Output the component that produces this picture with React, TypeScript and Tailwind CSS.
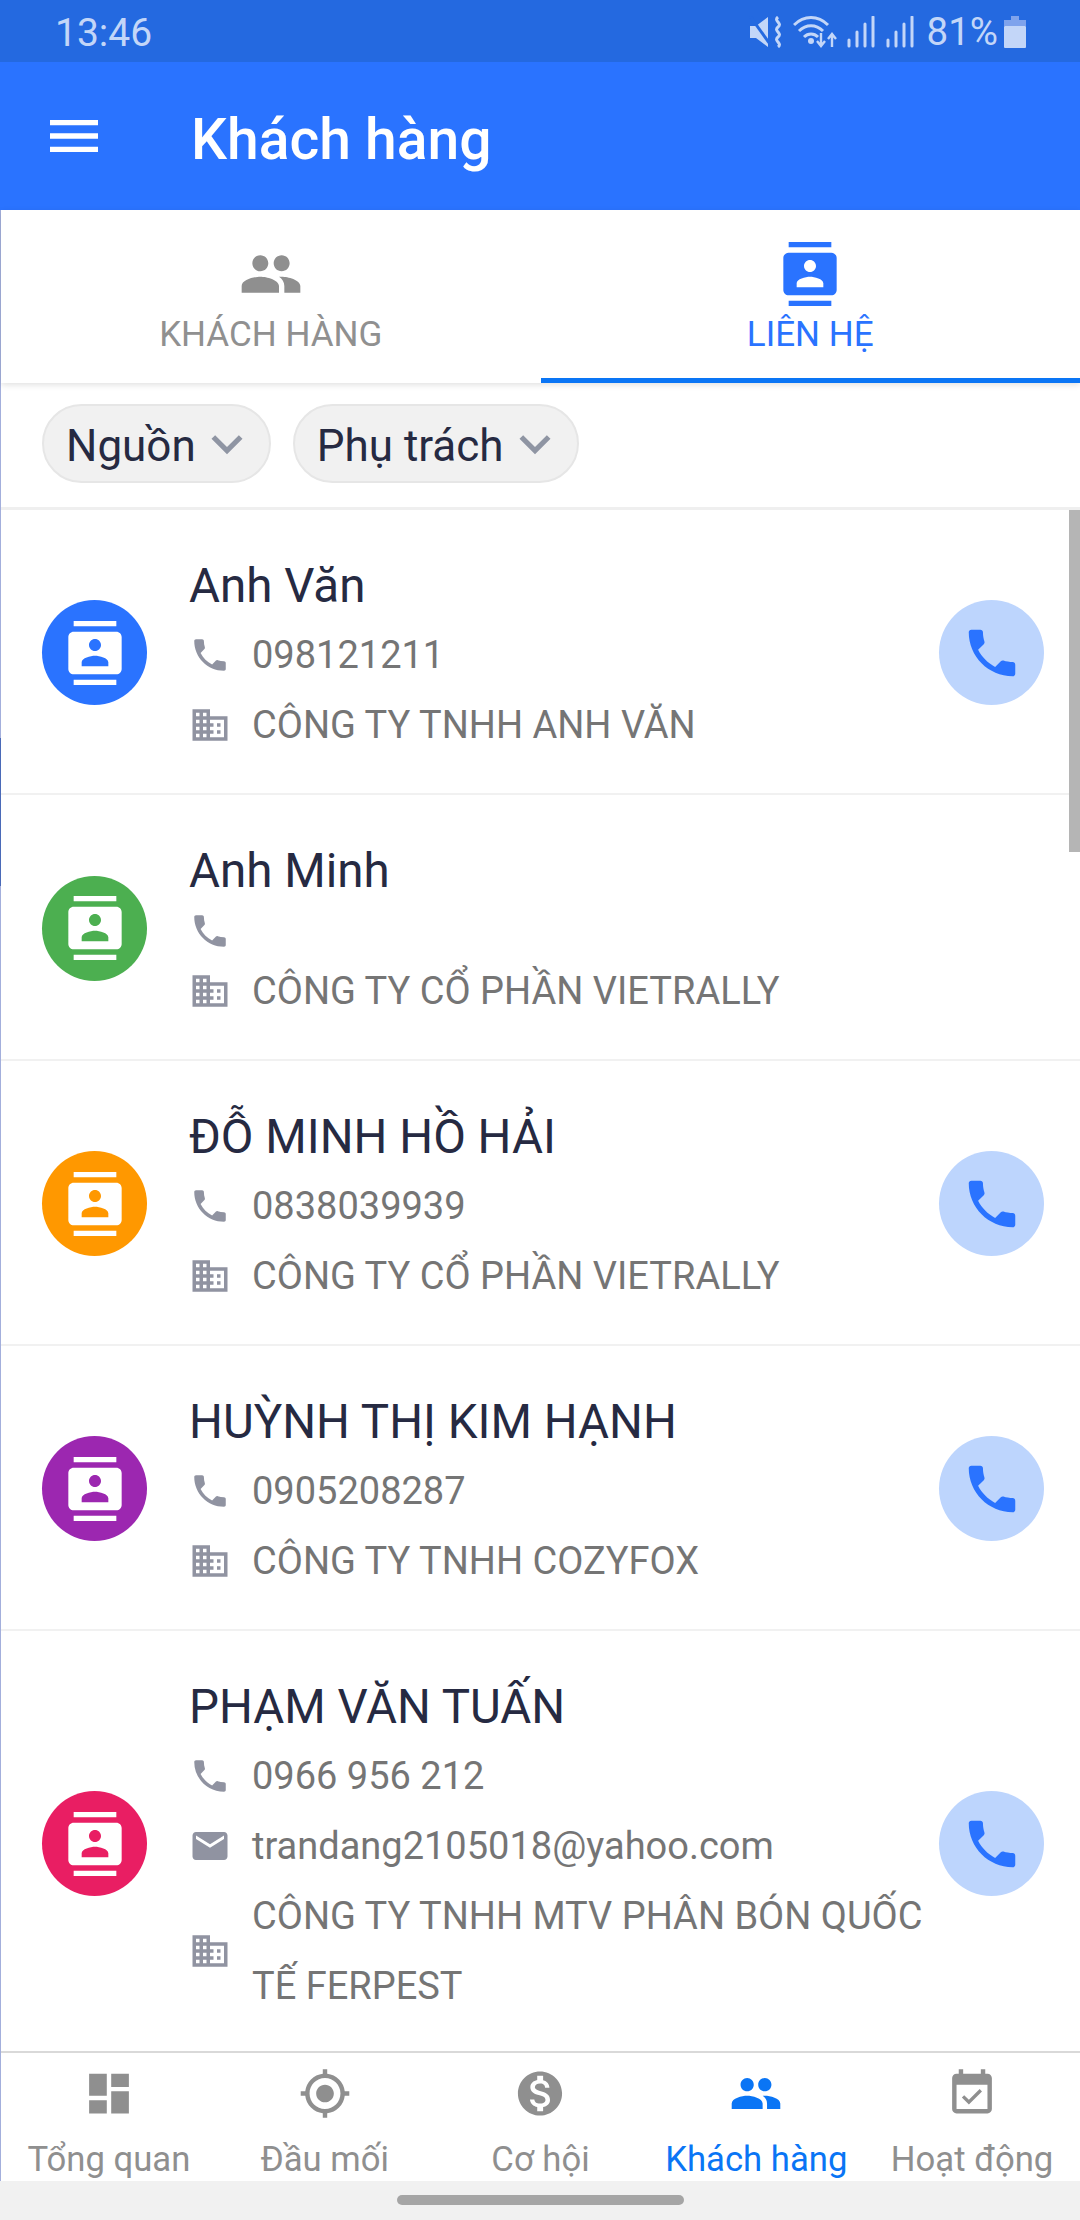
import React from "react";
import {
  MdPeople, MdContacts, MdPhone, MdDomain, MdEmail, MdDashboard, MdGpsFixed,
  MdMonetizationOn, MdEventAvailable, MdMenu, MdKeyboardArrowDown,
} from "react-icons/md";

function StatusIcons() {
  return (
    <div className="flex items-center text-[#c3d6f8]">
      <svg width="34" height="32" viewBox="0 0 34 32" className="mr-[10px]">
        <path d="M1 10h6L19 1v30L7 22H1z" fill="#c3d6f8" />
        <path d="M1 0l22 31" stroke="#2469e0" strokeWidth="3" />
        <path d="M29 1c-5 4 5 6 0 10s5 6 0 10 5 6 0 10" stroke="#c3d6f8" strokeWidth="3" fill="none" />
      </svg>
      <svg width="44" height="32" viewBox="0 0 44 32" className="mr-[10px]">
        <path d="M1 9c10-10 24-10 34 0M6 15c7-7 17-7 24 0M11 21c4-4 10-4 14 0" stroke="#c3d6f8" strokeWidth="3" fill="none" />
        <circle cx="18" cy="25" r="3" fill="#c3d6f8" />
        <path d="M28 17v12M24 25l4 5 4-5M39 31V19M35 23l4-5 4 5" stroke="#c3d6f8" strokeWidth="2.4" fill="none" />
      </svg>
      <svg width="28" height="32" viewBox="0 0 28 32" className="mr-[11px]">
        <path d="M2 24v6M10 16v14M18 8v22M26 1v29" stroke="#c3d6f8" strokeWidth="3" strokeLinecap="round" />
      </svg>
      <svg width="28" height="32" viewBox="0 0 28 32" className="mr-[13px]">
        <path d="M2 24v6M10 16v14M18 8v22M26 1v29" stroke="#c3d6f8" strokeWidth="3" strokeLinecap="round" />
      </svg>
      <span className="mr-[6px] text-[38.5px] leading-none">81%</span>
      <svg width="22" height="32" viewBox="0 0 22 32">
        <path d="M7 0h8v4h7v6H0V4h7z" fill="#7fa3ec" />
        <rect x="0" y="10" width="22" height="22" rx="1" fill="#c3d6f8" />
      </svg>
    </div>
  );
}

function Line({ icon: Icon, children, empty }: { icon: any; children?: React.ReactNode; empty?: boolean }) {
  return (
    <div className={empty ? "flex h-[51px] items-center gap-[21px]" : "flex items-center gap-[21px]"}>
      <Icon size={42} className="shrink-0 text-[#9093a1]" />
      <div className="text-[38px] leading-[70px] text-[#757575]">{children}</div>
    </div>
  );
}

type Row = {
  name: string; color: string; phone?: string; email?: string; company: React.ReactNode;
};

const rows: Row[] = [
  { name: "Anh Văn", color: "bg-[#2a73ff]", phone: "098121211", company: "CÔNG TY TNHH ANH VĂN" },
  { name: "Anh Minh", color: "bg-[#4caf50]", company: "CÔNG TY CỔ PHẦN VIETRALLY" },
  { name: "ĐỖ MINH HỒ HẢI", color: "bg-[#ff9800]", phone: "0838039939", company: "CÔNG TY CỔ PHẦN VIETRALLY" },
  { name: "HUỲNH THỊ KIM HẠNH", color: "bg-[#9c27b0]", phone: "0905208287", company: "CÔNG TY TNHH COZYFOX" },
  { name: "PHẠM VĂN TUẤN", color: "bg-[#e91e63]", phone: "0966 956 212", email: "trandang2105018@yahoo.com", company: "CÔNG TY TNHH MTV PHÂN BÓN QUỐC TẾ FERPEST" },
];

function ContactRow({ r }: { r: Row }) {
  return (
    <div className="flex shrink-0 items-center border-b-2 border-[#f1f1f1] pl-[41px] pr-[36px] pt-[35px] pb-[33px]">
      <div className={`mr-[42px] flex size-[105px] shrink-0 items-center justify-center rounded-full text-white ${r.color}`}>
        <MdContacts size={64} />
      </div>
      <div className="min-w-0 flex-1 pt-[5px]">
        <div className="pt-px -mb-px text-[47.5px] leading-[70px] text-[#262a42]">{r.name}</div>
        {r.phone ? <Line icon={MdPhone}>{r.phone}</Line> : <Line icon={MdPhone} empty />}
        {r.email && <Line icon={MdEmail}>{r.email}</Line>}
        <Line icon={MdDomain}>{r.company}</Line>
      </div>
      {r.phone ? (
        <div className="flex size-[105px] shrink-0 items-center justify-center rounded-full bg-[#bdd5fd] text-[#2a73ff]">
          <MdPhone size={62} />
        </div>
      ) : (
        <div className="w-[105px] shrink-0" />
      )}
    </div>
  );
}

const nav = [
  { label: "Tổng quan", icon: MdDashboard },
  { label: "Đầu mối", icon: MdGpsFixed },
  { label: "Cơ hội", icon: MdMonetizationOn },
  { label: "Khách hàng", icon: MdPeople, active: true },
  { label: "Hoạt động", icon: MdEventAvailable },
];

export default function App() {
  return (
    <div className="flex h-[2220px] w-[1080px] flex-col overflow-hidden bg-white font-['Roboto',sans-serif]">
      <div className="flex h-[62px] shrink-0 items-center justify-between bg-[#2469e0] pl-[55px] pr-[54px] pt-[2px]">
        <span className="pt-[2px] text-[39px] leading-none text-[#c3d6f8]">13:46</span>
        <StatusIcons />
      </div>
      <div className="flex h-[148px] shrink-0 items-center bg-[#2a73ff] pl-[42px] text-white">
        <MdMenu size={64} />
        <span className="ml-[85px] pt-[6px] text-[57px] font-medium leading-none">Khách hàng</span>
      </div>

      <div className="relative flex min-h-0 flex-1 flex-col border-l border-[#a3afdc]">
        <div className="absolute left-[-1px] top-[528px] z-20 h-[148px] w-px bg-[#4a6ab8]" />
        <div className="z-10 flex h-[173px] shrink-0 bg-white shadow-[0_2px_6px_rgba(0,0,0,0.12)]">
          <div className="flex flex-1 flex-col items-center pt-[32px] text-[#8f8f8f]">
            <MdPeople size={64} />
            <span className="mt-[9px] text-[35px] leading-[40px] text-[#909090]">KHÁCH HÀNG</span>
          </div>
          <div className="flex flex-1 flex-col items-center border-b-[5px] border-[#0a75f5] pt-[32px] text-[#2a73ff]">
            <MdContacts size={64} />
            <span className="mt-[9px] text-[35px] leading-[40px]">LIÊN HỆ</span>
          </div>
        </div>

        <div className="flex h-[127px] shrink-0 items-start gap-[22px] border-b-[3px] border-[#efefef] pl-[41px] pt-[21px]">
          {["Nguồn", "Phụ trách"].map((t) => (
            <div key={t} className="flex h-[79px] items-center rounded-full border-2 border-[#e6e6e6] bg-[#f1f1f1] pl-[22px] pr-[11px]">
              <span className="pt-[4px] text-[44px] leading-none text-[#262a42]">{t}</span>
              <MdKeyboardArrowDown size={62} className="text-[#8f95a3]" />
            </div>
          ))}
        </div>

        <div className="relative flex min-h-0 flex-1 flex-col overflow-hidden">
          {rows.map((r) => <ContactRow key={r.name} r={r} />)}
          <div className="absolute right-0 top-0 h-[342px] w-[11px] bg-[#b5b5b5]" />
        </div>

        <div className="flex h-[130px] shrink-0 border-t-2 border-[#d9d9d9] bg-white">
          {nav.map((n) => (
            <div key={n.label} className={`flex flex-1 flex-col items-center overflow-hidden pt-[14px] ${n.active ? "text-[#0a75f5]" : "text-[#8f8f8f]"}`}>
              <n.icon size={54} />
              <span className="mt-[17px] whitespace-nowrap text-[34.7px] leading-[44px]">{n.label}</span>
            </div>
          ))}
        </div>
      </div>

      <div className="flex h-[39px] shrink-0 items-start justify-center bg-[#f1f1f1] pt-[14px]">
        <div className="h-[10px] w-[287px] rounded-full bg-[#a5a5a5]" />
      </div>
    </div>
  );
}
